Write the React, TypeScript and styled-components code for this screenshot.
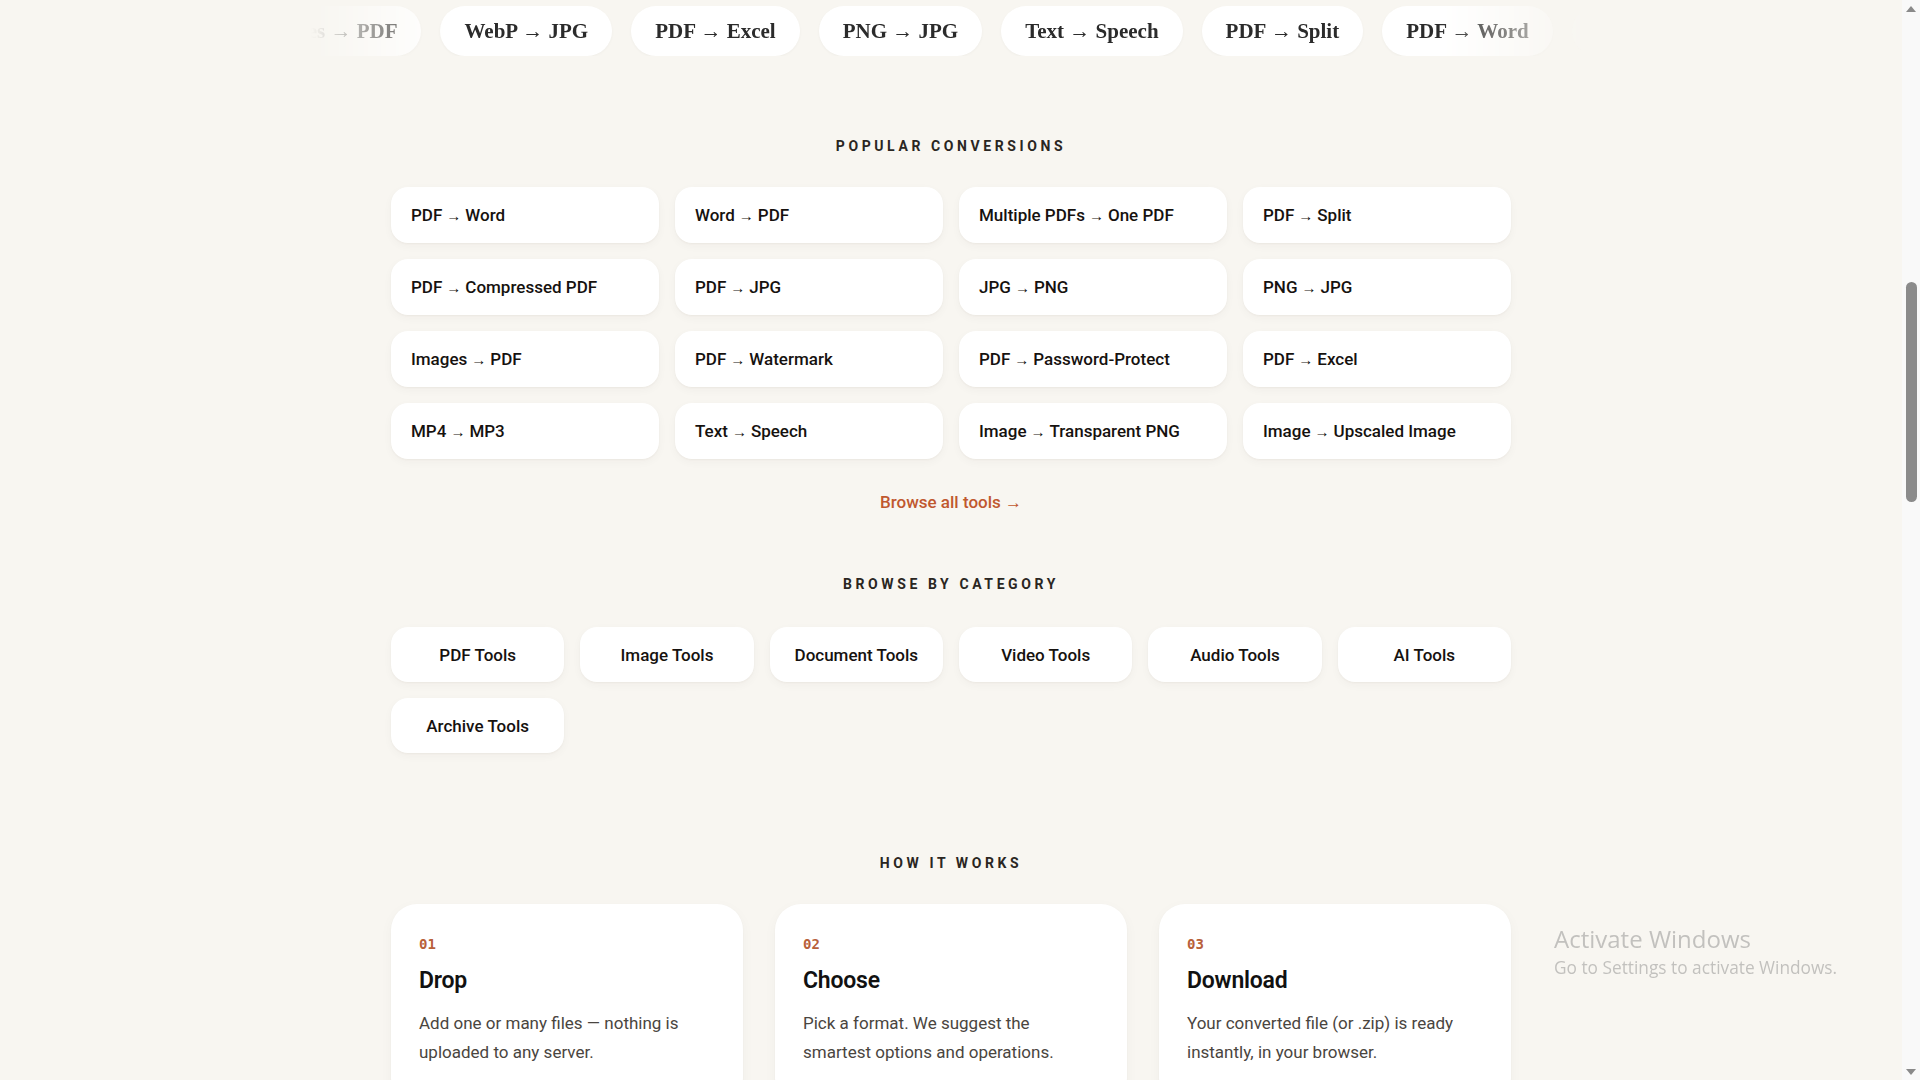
import React from "react";
import styled, { createGlobalStyle } from "styled-components";

const GlobalStyle = createGlobalStyle`
  html, body {
    margin: 0;
    padding: 0;
    background: #f8f6f1;
    overflow: hidden;
  }
  body {
    font-family: Roboto, "Liberation Sans", Arial, sans-serif;
    color: #1a1a1a;
  }
  * { box-sizing: border-box; }
`;

const Page = styled.div`
  display: flex;
  width: 100vw;
  height: 100vh;
  background: #f8f6f1;
`;

const Main = styled.main`
  flex: 1;
  min-width: 0;
  height: 100%;
  overflow: hidden;
  padding-top: 6px;
`;

const Marquee = styled.div`
  width: 1280px;
  margin: 0 auto;
  overflow: hidden;
  -webkit-mask-image: linear-gradient(to right, transparent 0%, #000 11%, #000 88%, transparent 100%);
  mask-image: linear-gradient(to right, transparent 0%, #000 11%, #000 88%, transparent 100%);
`;

const Track = styled.div<{ $offset: number }>`
  display: flex;
  gap: 19px;
  width: max-content;
  transform: translateX(${(p) => p.$offset}px);
`;

const Pill = styled.span`
  display: inline-flex;
  align-items: center;
  height: 50px;
  padding: 0 24px;
  border-radius: 25px;
  background: #ffffff;
  font-family: "Liberation Serif", "Times New Roman", serif;
  font-weight: 700;
  font-size: 21px;
  color: #2b2b2b;
  white-space: pre;
  box-shadow: 0 1px 3px rgba(60, 40, 20, 0.04);
`;

const CardArrow = styled.span`
  font-family: "Liberation Sans", Arial, sans-serif;
  font-weight: 400;
  font-size: 15px;
  margin: 0 4px;
  vertical-align: 1px;
`;

const Container = styled.div`
  width: 1120px;
  margin: 0 auto;
  display: flex;
  flex-direction: column;
`;

const SectionTitle = styled.h2<{ $gap: number }>`
  margin: ${(p) => p.$gap}px 0 0;
  text-align: center;
  font-family: Roboto, "Liberation Sans", sans-serif;
  font-size: 14px;
  line-height: 18px;
  font-weight: 700;
  letter-spacing: 3.6px;
  color: #2a2622;
  text-transform: uppercase;
`;

const ConversionGrid = styled.div`
  margin-top: 32px;
  display: grid;
  grid-template-columns: repeat(4, 1fr);
  gap: 16px;
`;

const ConversionCard = styled.a`
  display: flex;
  align-items: center;
  height: 56px;
  padding: 0 20px;
  border-radius: 17px;
  background: #ffffff;
  font-size: 17px;
  font-weight: 500;
  color: #16120f;
  text-decoration: none;
  white-space: pre;
  box-shadow: 0 1px 2px rgba(60, 40, 20, 0.04), 0 3px 10px rgba(60, 40, 20, 0.035);
`;

const BrowseLink = styled.a`
  margin-top: 31px;
  align-self: center;
  font-size: 17px;
  line-height: 24px;
  font-weight: 500;
  color: #c0582f;
  text-decoration: none;
`;

const CategoryGrid = styled.div`
  margin-top: 34px;
  display: grid;
  grid-template-columns: repeat(6, 1fr);
  gap: 16px;
`;

const CategoryCard = styled.a`
  display: flex;
  align-items: center;
  justify-content: center;
  height: 55px;
  border-radius: 17px;
  background: #ffffff;
  font-size: 17px;
  font-weight: 500;
  color: #16120f;
  text-decoration: none;
  box-shadow: 0 1px 2px rgba(60, 40, 20, 0.04), 0 3px 10px rgba(60, 40, 20, 0.035);
`;

const StepsGrid = styled.div`
  margin-top: 32px;
  display: grid;
  grid-template-columns: repeat(3, 1fr);
  gap: 32px;
`;

const StepCard = styled.div`
  display: flex;
  flex-direction: column;
  padding: 32px 28px 36px;
  border-radius: 26px;
  background: #ffffff;
  box-shadow: 0 1px 2px rgba(60, 40, 20, 0.04), 0 4px 14px rgba(60, 40, 20, 0.035);
`;

const StepNumber = styled.span`
  font-family: "DejaVu Sans Mono", "Liberation Mono", monospace;
  font-size: 14px;
  line-height: 16px;
  font-weight: 700;
  color: #b8603a;
`;

const StepTitle = styled.h3`
  margin: 14px 0 0;
  font-size: 23px;
  line-height: 30px;
  font-weight: 600;
  color: #111;
  letter-spacing: -0.2px;
`;

const StepText = styled.p`
  margin: 13px 0 0;
  font-size: 17px;
  line-height: 29px;
  font-weight: 400;
  color: #4a4540;
`;

const Scrollbar = styled.div`
  width: 18px;
  height: 100%;
  background: #f9f9f9;
  display: flex;
  flex-direction: column;
  align-items: center;
`;

const ArrowButton = styled.div<{ $down?: boolean }>`
  height: 17px;
  width: 100%;
  display: flex;
  align-items: center;
  justify-content: center;
  &::after {
    content: "";
    width: 0;
    height: 0;
    border-left: 5px solid transparent;
    border-right: 5px solid transparent;
    ${(p) =>
      p.$down
        ? "border-top: 6px solid #8a8a8a;"
        : "border-bottom: 6px solid #8a8a8a;"}
  }
`;

const ScrollSpacer = styled.div`
  flex: 1;
`;

const Thumb = styled.div`
  margin-top: 265px;
  width: 11px;
  height: 220px;
  border-radius: 6px;
  background: #8b8b8b;
`;

const Watermark = styled.div`
  position: fixed;
  left: 1554px;
  top: 924px;
  font-family: "Open Sans", "Noto Sans", sans-serif;
  color: rgba(120, 120, 120, 0.42);
  pointer-events: none;
`;

const WatermarkTitle = styled.div`
  font-size: 24px;
  line-height: 30px;
  font-weight: 400;
`;

const WatermarkSub = styled.div`
  font-size: 17.3px;
  line-height: 22px;
  margin-top: 3px;
`;

const marqueeItems = [
  "Images → PDF",
  "WebP → JPG",
  "PDF → Excel",
  "PNG → JPG",
  "Text → Speech",
  "PDF → Split",
  "PDF → Word",
  "MP4 → MP3",
];

const conversions = [
  "PDF → Word",
  "Word → PDF",
  "Multiple PDFs → One PDF",
  "PDF → Split",
  "PDF → Compressed PDF",
  "PDF → JPG",
  "JPG → PNG",
  "PNG → JPG",
  "Images → PDF",
  "PDF → Watermark",
  "PDF → Password-Protect",
  "PDF → Excel",
  "MP4 → MP3",
  "Text → Speech",
  "Image → Transparent PNG",
  "Image → Upscaled Image",
];

const categories = [
  "PDF Tools",
  "Image Tools",
  "Document Tools",
  "Video Tools",
  "Audio Tools",
  "AI Tools",
  "Archive Tools",
];

const steps = [
  {
    n: "01",
    title: "Drop",
    text: "Add one or many files — nothing is uploaded to any server.",
  },
  {
    n: "02",
    title: "Choose",
    text: "Pick a format. We suggest the smartest options and operations.",
  },
  {
    n: "03",
    title: "Download",
    text: "Your converted file (or .zip) is ready instantly, in your browser.",
  },
];

const split = (label: string) => label.split(" → ");

export default function App() {
  return (
    <>
      <GlobalStyle />
      <Page>
        <Main>
          <Marquee>
            <Track $offset={-74}>
              {marqueeItems.map((m) => (
                <Pill key={m}>{m}</Pill>
              ))}
            </Track>
          </Marquee>
          <Container>
            <SectionTitle $gap={81}>Popular conversions</SectionTitle>
            <ConversionGrid>
              {conversions.map((c) => {
                const [a, b] = split(c);
                return (
                  <ConversionCard key={c} href="#">
                    {a}
                    <CardArrow>→</CardArrow>
                    {b}
                  </ConversionCard>
                );
              })}
            </ConversionGrid>
            <BrowseLink href="#">Browse all tools →</BrowseLink>
            <SectionTitle $gap={61}>Browse by category</SectionTitle>
            <CategoryGrid>
              {categories.map((c) => (
                <CategoryCard key={c} href="#">
                  {c}
                </CategoryCard>
              ))}
            </CategoryGrid>
            <SectionTitle $gap={101}>How it works</SectionTitle>
            <StepsGrid>
              {steps.map((s) => (
                <StepCard key={s.n}>
                  <StepNumber>{s.n}</StepNumber>
                  <StepTitle>{s.title}</StepTitle>
                  <StepText>{s.text}</StepText>
                </StepCard>
              ))}
            </StepsGrid>
          </Container>
        </Main>
        <Scrollbar>
          <ArrowButton />
          <Thumb />
          <ScrollSpacer />
          <ArrowButton $down />
        </Scrollbar>
      </Page>
      <Watermark>
        <WatermarkTitle>Activate Windows</WatermarkTitle>
        <WatermarkSub>Go to Settings to activate Windows.</WatermarkSub>
      </Watermark>
    </>
  );
}
